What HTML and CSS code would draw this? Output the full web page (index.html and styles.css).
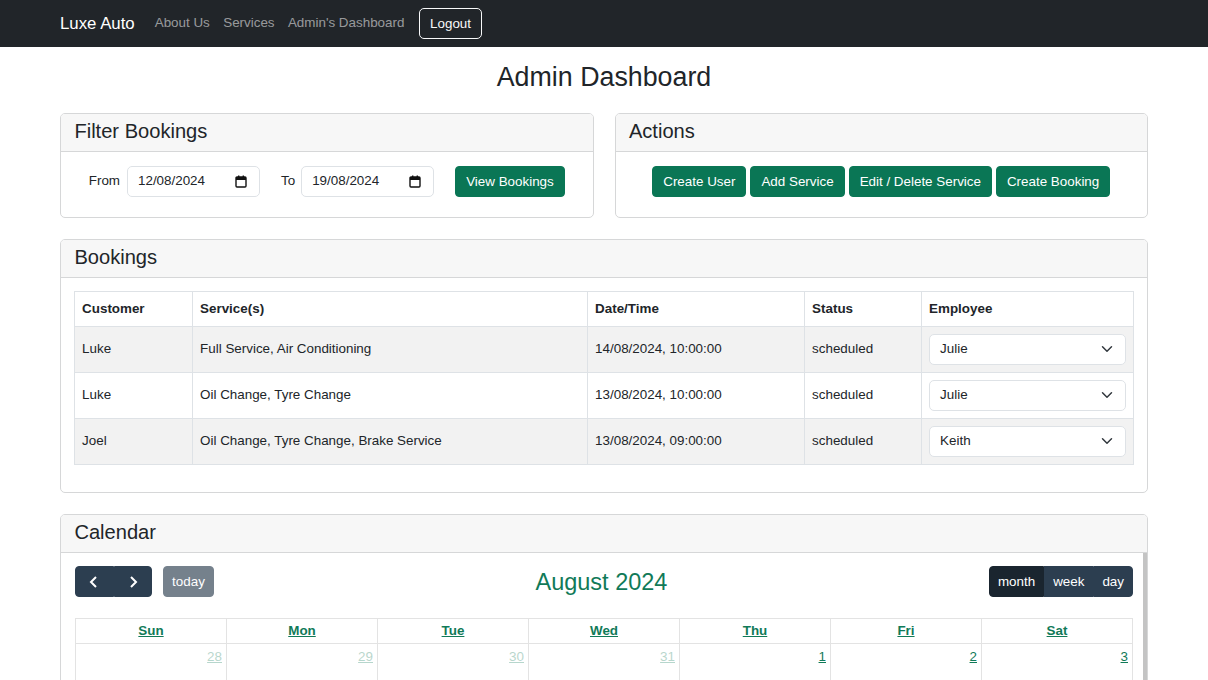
FILE: index.html
```html
<!DOCTYPE html>
<html lang="en">
<head>
<meta charset="utf-8">
<title>Admin Dashboard - Luxe Auto</title>
<link rel="stylesheet" href="styles.css">
</head>
<body>
<nav class="navbar">
  <div class="nav-inner">
    <a class="brand" href="#">Luxe Auto</a>
    <a class="nav-link" href="#">About Us</a>
    <a class="nav-link" href="#">Services</a>
    <a class="nav-link" href="#">Admin's Dashboard</a>
    <button class="btn-logout">Logout</button>
  </div>
</nav>

<main class="container">
  <h2 class="page-title">Admin Dashboard</h2>

  <div class="row-two">
    <section class="card">
      <div class="card-header">Filter Bookings</div>
      <div class="card-body">
        <div class="filter-form">
          <span class="lbl">From</span>
          <div class="date-field"><span>12/08/2024</span>
            <svg class="cal-ico" width="12" height="13" viewBox="0 0 12 13"><rect x="1" y="2" width="10" height="10" rx="1" fill="none" stroke="#111" stroke-width="1.4"/><rect x="1" y="2" width="10" height="3" fill="#111"/><rect x="3" y="0.5" width="1.4" height="2.5" fill="#111"/><rect x="7.6" y="0.5" width="1.4" height="2.5" fill="#111"/></svg>
          </div>
          <span class="lbl lbl-to">To</span>
          <div class="date-field"><span>19/08/2024</span>
            <svg class="cal-ico" width="12" height="13" viewBox="0 0 12 13"><rect x="1" y="2" width="10" height="10" rx="1" fill="none" stroke="#111" stroke-width="1.4"/><rect x="1" y="2" width="10" height="3" fill="#111"/><rect x="3" y="0.5" width="1.4" height="2.5" fill="#111"/><rect x="7.6" y="0.5" width="1.4" height="2.5" fill="#111"/></svg>
          </div>
          <button class="btn-green btn-view">View Bookings</button>
        </div>
      </div>
    </section>

    <section class="card">
      <div class="card-header">Actions</div>
      <div class="card-body">
        <div class="actions">
          <button class="btn-green">Create User</button>
          <button class="btn-green">Add Service</button>
          <button class="btn-green">Edit / Delete Service</button>
          <button class="btn-green">Create Booking</button>
        </div>
      </div>
    </section>
  </div>

  <section class="card card-bookings">
    <div class="card-header">Bookings</div>
    <div class="card-body">
      <table class="table">
        <colgroup>
          <col class="c1"><col class="c2"><col class="c3"><col class="c4"><col class="c5">
        </colgroup>
        <thead>
          <tr><th>Customer</th><th>Service(s)</th><th>Date/Time</th><th>Status</th><th>Employee</th></tr>
        </thead>
        <tbody>
          <tr class="odd"><td>Luke</td><td>Full Service, Air Conditioning</td><td>14/08/2024, 10:00:00</td><td>scheduled</td>
            <td><div class="select"><span>Julie</span><svg width="12" height="12" viewBox="0 0 16 16"><path d="M2 5l6 6 6-6" fill="none" stroke="#343a40" stroke-width="2" stroke-linecap="round" stroke-linejoin="round"/></svg></div></td></tr>
          <tr><td>Luke</td><td>Oil Change, Tyre Change</td><td>13/08/2024, 10:00:00</td><td>scheduled</td>
            <td><div class="select"><span>Julie</span><svg width="12" height="12" viewBox="0 0 16 16"><path d="M2 5l6 6 6-6" fill="none" stroke="#343a40" stroke-width="2" stroke-linecap="round" stroke-linejoin="round"/></svg></div></td></tr>
          <tr class="odd"><td>Joel</td><td>Oil Change, Tyre Change, Brake Service</td><td>13/08/2024, 09:00:00</td><td>scheduled</td>
            <td><div class="select"><span>Keith</span><svg width="12" height="12" viewBox="0 0 16 16"><path d="M2 5l6 6 6-6" fill="none" stroke="#343a40" stroke-width="2" stroke-linecap="round" stroke-linejoin="round"/></svg></div></td></tr>
        </tbody>
      </table>
    </div>
  </section>

  <section class="card card-calendar">
    <div class="card-header">Calendar</div>
    <div class="card-body cal-body">
      <div class="fc-toolbar">
        <div class="fc-left">
          <div class="btn-group">
            <button class="fc-btn fc-arrow"><svg width="12" height="14" viewBox="0 0 12 14"><path d="M8 2L3 7l5 5" fill="none" stroke="#fff" stroke-width="2"/></svg></button>
            <button class="fc-btn fc-arrow"><svg width="12" height="14" viewBox="0 0 12 14"><path d="M4 2l5 5-5 5" fill="none" stroke="#fff" stroke-width="2"/></svg></button>
          </div>
          <button class="fc-btn fc-today">today</button>
        </div>
        <h2 class="fc-title">August 2024</h2>
        <div class="btn-group fc-right">
          <button class="fc-btn active">month</button>
          <button class="fc-btn">week</button>
          <button class="fc-btn">day</button>
        </div>
      </div>
      <table class="fc-grid">
        <thead>
          <tr><th><a href="#">Sun</a></th><th><a href="#">Mon</a></th><th><a href="#">Tue</a></th><th><a href="#">Wed</a></th><th><a href="#">Thu</a></th><th><a href="#">Fri</a></th><th><a href="#">Sat</a></th></tr>
        </thead>
        <tbody>
          <tr><td class="other"><a href="#">28</a></td><td class="other"><a href="#">29</a></td><td class="other"><a href="#">30</a></td><td class="other"><a href="#">31</a></td><td><a href="#">1</a></td><td><a href="#">2</a></td><td><a href="#">3</a></td></tr>
          <tr><td><a href="#">4</a></td><td><a href="#">5</a></td><td><a href="#">6</a></td><td><a href="#">7</a></td><td><a href="#">8</a></td><td><a href="#">9</a></td><td><a href="#">10</a></td></tr>
          <tr><td><a href="#">11</a></td><td><a href="#">12</a></td><td><a href="#">13</a></td><td><a href="#">14</a></td><td><a href="#">15</a></td><td><a href="#">16</a></td><td><a href="#">17</a></td></tr>
          <tr><td><a href="#">18</a></td><td><a href="#">19</a></td><td><a href="#">20</a></td><td><a href="#">21</a></td><td><a href="#">22</a></td><td><a href="#">23</a></td><td><a href="#">24</a></td></tr>
          <tr><td><a href="#">25</a></td><td><a href="#">26</a></td><td><a href="#">27</a></td><td><a href="#">28</a></td><td><a href="#">29</a></td><td><a href="#">30</a></td><td><a href="#">31</a></td></tr>
        </tbody>
      </table>
    </div>
  </section>
</main>
</body>
</html>
```

FILE: styles.css
```css
* { box-sizing: border-box; }

body {
  margin: 0;
  font-family: "Liberation Sans", Arial, sans-serif;
  font-size: 13.4px;
  line-height: 1.5;
  color: #212529;
  background: #fff;
}

a { color: inherit; text-decoration: none; }
button { font-family: inherit; cursor: pointer; white-space: nowrap; }

/* Navbar */
.navbar {
  background: #212529;
  height: 47px;
}
.nav-inner {
  width: 1088px;
  margin: 0 auto;
  height: 47px;
  display: flex;
  align-items: center;
}
.brand {
  color: #fff;
  font-size: 16.8px;
  margin-right: 13.4px;
}
.nav-link {
  color: rgba(255, 255, 255, 0.55);
  padding: 0 6.7px;
}
.btn-logout {
  margin-left: 8px;
  height: 31px;
  padding: 0 10px;
  background: transparent;
  color: #f8f9fa;
  border: 1px solid #f8f9fa;
  border-radius: 5px;
  font-size: 13.4px;
}

/* Layout */
.container {
  width: 1088px;
  margin: 0 auto;
}
.page-title {
  margin: 14px 0 20px;
  text-align: center;
  font-size: 26.8px;
  font-weight: 500;
  line-height: 1.2;
}
.row-two {
  display: grid;
  grid-template-columns: 1fr 1fr;
  gap: 21px;
  margin-bottom: 21px;
}

/* Cards */
.card {
  border: 1px solid #d6d7d8;
  border-radius: 5px;
  background: #fff;
  overflow: hidden;
}
.card-header {
  background: #f7f7f7;
  border-bottom: 1px solid #d6d7d8;
  padding: 5px 13.4px;
  font-size: 20.1px;
  line-height: 1.2;
  height: 38px;
}
.card-body {
  padding: 13.4px 13.4px 20px;
}

/* Filter form */
.filter-form {
  display: flex;
  align-items: center;
  justify-content: center;
}
.lbl { margin-right: 7px; color: #212529; }
.lbl-to { margin-left: 21px; margin-right: 6px; }
.date-field {
  width: 133px;
  height: 31px;
  border: 1px solid #dee2e6;
  border-radius: 5px;
  display: flex;
  align-items: center;
  justify-content: space-between;
  padding: 0 12px 0 10px;
}
.btn-green {
  background: #0a7655;
  color: #fff;
  border: 1px solid #0a7655;
  border-radius: 4px;
  height: 31px;
  padding: 0 10px;
  font-size: 13.4px;
}
.btn-view { margin-left: 21px; }

.actions {
  display: flex;
  justify-content: center;
  gap: 4px;
}

/* Bookings table */
.card-bookings { margin-bottom: 21px; }
.card-bookings .card-body { padding: 13.4px 13.4px 14px; }
.table {
  width: 100%;
  border-collapse: collapse;
  margin-bottom: 13.4px;
}
.c1 { width: 118px; }
.c2 { width: 395px; }
.c3 { width: 217px; }
.c4 { width: 117px; }
.table th, .table td {
  border: 1px solid #dee2e6;
  padding: 6.7px 6.7px;
  text-align: left;
  vertical-align: middle;
}
.table th { font-weight: bold; height: 35px; }
.table td { height: 46px; }
.table tr.odd td { background: #f2f2f2; }
.select {
  height: 31px;
  background: #fff;
  border: 1px solid #dee2e6;
  border-radius: 5px;
  display: flex;
  align-items: center;
  justify-content: space-between;
  padding: 0 12px 0 10px;
}

/* Calendar */
.cal-body {
  padding: 13px 10px 40px 14px;
  border-right: 4px solid #c4c4c4;
}
.fc-toolbar {
  display: flex;
  align-items: center;
  justify-content: space-between;
  margin-bottom: 21px;
}
.fc-left { display: flex; align-items: center; gap: 11px; }
.btn-group { display: flex; }
.fc-btn {
  height: 31px;
  background: #2c3e50;
  color: #fff;
  border: 1px solid #2c3e50;
  font-size: 13.4px;
  padding: 0 7px;
  border-radius: 0;
}
.btn-group .fc-btn:first-child { border-radius: 4px 0 0 4px; }
.btn-group .fc-btn:last-child { border-radius: 0 4px 4px 0; }
.fc-arrow { width: 38.5px; display: flex; align-items: center; justify-content: center; }
.fc-today { border-radius: 4px; width: 51px; opacity: 0.65; }
.fc-btn.active { background: #1a252f; border-color: #1a252f; }
.fc-right .fc-btn { padding: 0 8px; }
.fc-title {
  margin: 0;
  font-size: 23.5px;
  font-weight: normal;
  color: #117a58;
  line-height: 1.2;
}
.fc-grid {
  width: 100%;
  border-collapse: collapse;
  table-layout: fixed;
}
.fc-grid th, .fc-grid td {
  border: 1px solid #e3e3e3;
}
.fc-grid th {
  height: 25px;
  padding: 0 4px;
  font-weight: bold;
  text-align: center;
}
.fc-grid th a, .fc-grid td a {
  color: #117a58;
  text-decoration: underline;
}
.fc-grid td {
  height: 120px;
  vertical-align: top;
  text-align: right;
  padding: 3px 4px;
}
.fc-grid td.other a { opacity: 0.3; }
```
